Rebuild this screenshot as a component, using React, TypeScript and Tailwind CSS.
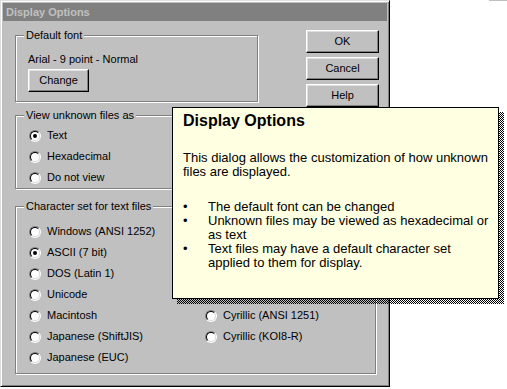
import type { ReactNode } from "react";

function Radio({ checked }: { checked?: boolean }) {
  return (
    <span className="inline-flex h-3 w-3 shrink-0 items-center justify-center rounded-full border border-t-[#808080] border-l-[#808080] border-r-white border-b-white">
      <span className="flex h-[10px] w-[10px] items-center justify-center rounded-full border border-t-black border-l-black border-r-[#dfdfdf] border-b-[#dfdfdf] bg-white">
        {checked ? <span className="h-1 w-1 rounded-full bg-black" /> : null}
      </span>
    </span>
  );
}

function Option({ label, checked }: { label?: string; checked?: boolean }) {
  return (
    <div className="flex h-[21px] items-center gap-[6px] whitespace-nowrap">
      {label ? (
        <>
          <Radio checked={checked} />
          <span>{label}</span>
        </>
      ) : null}
    </div>
  );
}

function Button({ label, className = "" }: { label: string; className?: string }) {
  return (
    <div
      className={`flex shrink-0 items-center justify-center border border-t-white border-l-white border-r-black border-b-black shadow-[inset_-1px_-1px_0_#808080,inset_1px_1px_0_#dfdfdf] ${className}`}
    >
      {label}
    </div>
  );
}

function Group({ label, className = "", children }: { label: string; className?: string; children?: ReactNode }) {
  return (
    <div className={`relative shrink-0 border border-[#808080] shadow-[inset_1px_1px_0_white,1px_1px_0_white] ${className}`}>
      <span className="absolute left-[8px] top-[-7px] bg-[#c0c0c0] px-[2px] leading-[13px]">{label}</span>
      {children}
    </div>
  );
}

export default function App() {
  return (
    <div className="relative h-[389px] w-[507px] bg-white font-['Liberation_Sans',Arial,sans-serif] text-[11px] leading-[13px] text-black">
      <div className="absolute left-[489px] top-0 h-px w-[18px] bg-[#c0c0c0]" />

      {/* dialog */}
      <div className="flex h-[387px] w-[390px] flex-col border border-t-[#dfdfdf] border-l-[#dfdfdf] border-r-black border-b-black bg-[#c0c0c0] p-[2px] shadow-[inset_1px_1px_0_white,inset_-1px_-1px_0_#808080]">
        <div className="flex h-[18px] items-center bg-[#808080] pl-[3px] font-bold text-[#c0c0c0]">Display Options</div>

        <div className="flex flex-col pl-[12px] pt-[9px]">
          <div className="flex">
            <div className="mt-[5px] flex w-[243px] shrink-0 flex-col">
              <Group label="Default font" className="h-[67px] pl-[12px] pt-[17px]">
                <div>Arial - 9 point - Normal</div>
                <Button label="Change" className="mt-[3px] h-[23px] w-[61px]" />
              </Group>
              <Group label="View unknown files as" className="mt-[13px] h-[74px] pl-[13px] pt-[9px]">
                <Option label="Text" checked />
                <Option label="Hexadecimal" />
                <Option label="Do not view" />
              </Group>
            </div>
            <div className="ml-[48px] flex shrink-0 flex-col gap-[4px]">
              <Button label="OK" className="h-[23px] w-[73px]" />
              <Button label="Cancel" className="h-[23px] w-[73px]" />
              <Button label="Help" className="h-[23px] w-[73px]" />
            </div>
          </div>

          <Group label="Character set for text files" className="mt-[17px] flex h-[168px] w-[361px] pl-[13px] pt-[14px]">
            <div className="flex w-[176px] flex-col">
              <Option label="Windows (ANSI 1252)" />
              <Option label="ASCII (7 bit)" checked />
              <Option label="DOS (Latin 1)" />
              <Option label="Unicode" />
              <Option label="Macintosh" />
              <Option label="Japanese (ShiftJIS)" />
              <Option label="Japanese (EUC)" />
            </div>
            <div className="flex flex-col">
              <Option />
              <Option />
              <Option />
              <Option />
              <Option label="Cyrillic (ANSI 1251)" />
              <Option label="Cyrillic (KOI8-R)" />
            </div>
          </Group>
        </div>
      </div>

      {/* help popup */}
      <div className="absolute left-[172px] top-[107px] h-[192px] w-[327px]">
        <div className="absolute left-[5px] top-[5px] h-full w-full [background-image:repeating-conic-gradient(#000_0%_25%,transparent_0%_50%)] [background-size:2px_2px]" />
        <div className="relative h-full w-full whitespace-nowrap border border-black bg-[#ffffe1] pl-[10px] pt-[3px] text-[13px] leading-[14px]">
          <div className="text-[16px] font-bold leading-[19px]">Display Options</div>
          <div className="mt-[21px]">
            This dialog allows the customization of how unknown
            <br />
            files are displayed.
          </div>
          <div className="mt-[21px] flex flex-col">
            <div className="flex">
              <span className="w-[25px]">•</span>
              <span>The default font can be changed</span>
            </div>
            <div className="flex">
              <span className="w-[25px]">•</span>
              <span>
                Unknown files may be viewed as hexadecimal or
                <br />
                as text
              </span>
            </div>
            <div className="flex">
              <span className="w-[25px]">•</span>
              <span>
                Text files may have a default character set
                <br />
                applied to them for display.
              </span>
            </div>
          </div>
        </div>
      </div>
    </div>
  );
}
